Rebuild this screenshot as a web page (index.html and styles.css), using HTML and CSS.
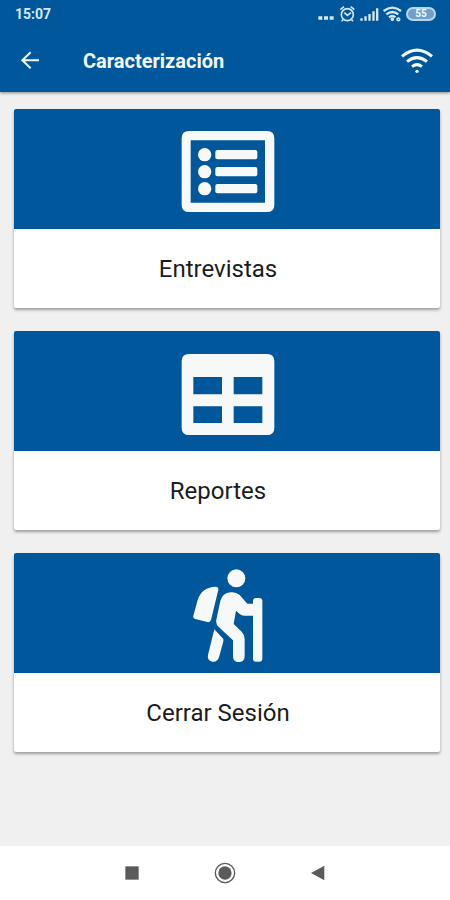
FILE: index.html
```html
<!DOCTYPE html>
<html lang="es">
<head>
<meta charset="utf-8">
<meta name="viewport" content="width=device-width, initial-scale=1">
<title>Caracterización</title>
<link rel="stylesheet" href="styles.css">
</head>
<body>
<header class="top">
  <div class="status">
    <time class="clock">15:07</time>
    <div class="indicators">
      <svg width="17" height="18" viewBox="0 0 51 54" aria-hidden="true"><path d="M1 34h12v10H1zM18 34h12v10H18zM35 34h12v10H35z"/></svg>
      <svg width="17" height="18" viewBox="0 0 51 54" class="line" aria-hidden="true"><circle cx="25" cy="29" r="18"/><path d="M4 14l11-9M46 14l-11-9M16 23l9 8 11-8M12 44l-4 5M38 44l4 5"/></svg>
      <svg width="19" height="18" viewBox="0 0 57 54" aria-hidden="true"><path d="M1 40h7v7H1zM13 34h7v13h-7zM25 27h7v20h-7zM37 19h7v28h-7zM48 10h7v37h-7z"/></svg>
      <svg width="19" height="18" viewBox="0 0 57 54" class="line" aria-hidden="true"><path d="M2 18q26-20 52 0M10 28q18-14 36 0M18 37q10-8 19 0" stroke-width="7"/><circle cx="28" cy="43" r="3"/><circle cx="46" cy="43" r="4"/></svg>
      <span class="battery">55</span>
    </div>
  </div>
  <div class="appbar">
    <button class="icon-button" type="button" aria-label="Volver">
      <svg width="20" height="20" viewBox="0 0 60 60" class="arrow" aria-hidden="true"><path d="M57 28H7M32 4L7 28l25 24"/></svg>
    </button>
    <h1>Caracterización</h1>
    <svg width="34" height="26" viewBox="0 0 102 78" class="wifi" role="img" aria-label="Conectado"><path d="M6 25Q51-12 96 25M21 41q30-24 60 0M36 56q15-12 30 0"/><circle cx="51" cy="70" r="5"/></svg>
  </div>
</header>
<main class="menu">
  <a class="card" href="#entrevistas">
    <span class="banner">
      <svg viewBox="-9 -35 360 360" aria-hidden="true"><path fill-rule="evenodd" d="M57 31H291Q313 31 313 53V252Q313 274 291 274H57Q35 274 35 252V53Q35 31 57 31ZM62 59V246H285V59Z"/><circle cx="104" cy="102" r="20"/><circle cx="104" cy="153" r="20"/><circle cx="104" cy="204" r="20"/><rect x="136" y="88" width="126" height="28" rx="6"/><rect x="136" y="139" width="126" height="28" rx="6"/><rect x="136" y="190" width="126" height="28" rx="6"/></svg>
    </span>
    <span class="label">Entrevistas</span>
  </a>
  <a class="card" href="#reportes">
    <span class="banner">
      <svg viewBox="-9 -29 360 360" aria-hidden="true"><path fill-rule="evenodd" d="M57 40H291Q313 40 313 62V261Q313 283 291 283H57Q35 283 35 261V62Q35 40 57 40ZM70 109V161H156V109ZM191 109V161H277V109ZM70 197V247H156V197ZM191 197V247H277V197Z"/></svg>
    </span>
    <span class="label">Reportes</span>
  </a>
  <a class="card" href="#salir">
    <span class="banner">
      <svg viewBox="-9 -22 360 360" aria-hidden="true"><circle cx="199" cy="54" r="27"/><path d="M138 79Q146 80 145 88L123 179Q120 187 112 185L76 176Q68 173 70 166L83 119Q95 80 138 79Z"/><path d="M182 96Q198 94 209 104L232 130H249V122Q249 113 258 113H268Q277 113 277 122V295Q277 304 268 304H258Q249 304 249 295V166H223Q215 166 209 161L198 151L191 191L215 214Q224 223 224 236V287Q224 305 206 305Q189 305 189 287V240L147 201Q136 191 139 178L151 122Q157 98 182 96Z"/><path d="M133 207L160 236Q161 241 159 247L147 291Q142 306 127 304Q110 300 114 284Z"/></svg>
    </span>
    <span class="label">Cerrar Sesión</span>
  </a>
</main>
<nav class="system" aria-label="Sistema">
  <button type="button" aria-label="Recientes"><svg width="22" height="22" viewBox="0 0 66 66" aria-hidden="true"><path d="M13 13h40v40H13z"/></svg></button>
  <button type="button" aria-label="Inicio"><svg width="22" height="22" viewBox="0 0 66 66" aria-hidden="true"><circle cx="33" cy="33" r="20"/><circle cx="33" cy="33" r="29" fill="none" stroke="#5b5b5b" stroke-width="4"/></svg></button>
  <button type="button" aria-label="Atrás"><svg width="22" height="22" viewBox="0 0 66 66" aria-hidden="true"><path d="M12 33L52 11v44z"/></svg></button>
</nav>
</body>
</html>
```

FILE: styles.css
```css
* {
  box-sizing: border-box;
}

body {
  margin: 0;
  min-height: 100vh;
  display: flex;
  flex-direction: column;
  background: #f0f0f0;
  font-family: Roboto, sans-serif;
  color: #1c1c1c;
}

button {
  border: 0;
  padding: 0;
  background: none;
  color: inherit;
}

svg {
  display: block;
  fill: currentColor;
}

.top {
  background: #01579b;
  color: #f3f9ff;
  box-shadow: 0 1px 3px rgba(0, 0, 0, 0.45);
}

.status {
  display: flex;
  justify-content: space-between;
  align-items: center;
  height: 28px;
  padding: 0 14px 0 15px;
  color: #d5e8f8;
}

.clock {
  font-size: 14px;
  font-weight: 700;
}

.indicators {
  display: flex;
  align-items: center;
  gap: 4px;
}

.line {
  fill: none;
  stroke: currentColor;
  stroke-width: 5;
}

.battery {
  width: 30px;
  height: 14px;
  border: 2px solid #b9d6ee;
  border-radius: 7px;
  background: #6f9fca;
  color: #f3f9ff;
  font-size: 10px;
  font-weight: 700;
  line-height: 10px;
  text-align: center;
}

.appbar {
  display: flex;
  align-items: center;
  height: 64px;
  padding: 2px 16px 0 20px;
}

.arrow,
.wifi {
  stroke: currentColor;
}

.arrow {
  fill: none;
  stroke-width: 6;
}

.wifi path {
  fill: none;
  stroke-width: 9;
}

.wifi circle {
  stroke: none;
}

h1 {
  flex: 1;
  margin: 0;
  padding-left: 43px;
  font-size: 20px;
  font-weight: 700;
  line-height: 24px;
}

.menu {
  flex: 1;
  display: flex;
  flex-direction: column;
  gap: 23px;
  padding: 17px 10px 23px 14px;
}

.card {
  display: block;
  border-radius: 2px;
  background: #fff;
  box-shadow: 0 2px 3px rgba(0, 0, 0, 0.35);
  color: inherit;
  text-decoration: none;
}

.banner {
  display: flex;
  justify-content: center;
  border-radius: 2px 2px 0 0;
  background: #01579b;
  color: #f7f8f8;
}

.banner svg {
  width: 120px;
  height: 120px;
}

.label {
  display: block;
  padding: 24px 18px 23px 0;
  font-size: 24px;
  line-height: 32px;
  text-align: center;
}

.system {
  display: flex;
  justify-content: center;
  align-items: center;
  gap: 71px;
  height: 54px;
  background: #fff;
  color: #5b5b5b;
}
```
